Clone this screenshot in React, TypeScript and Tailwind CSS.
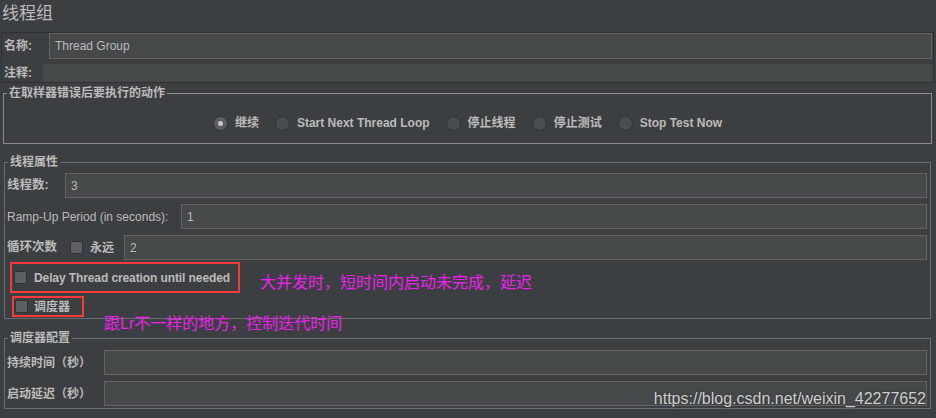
const Radio = ({ checked, label }: { checked?: boolean; label: string }) => (
  <label className="flex items-center gap-[7px]">
    <span
      className={`flex h-[15px] w-[15px] items-center justify-center rounded-full border border-[#2f3133] ${
        checked ? "bg-[#5b5e60]" : "bg-[#4a4d4f]"
      }`}
    >
      {checked && <span className="h-[5px] w-[5px] rounded-full bg-[#c8c8c8]" />}
    </span>
    <span className="font-bold">{label}</span>
  </label>
);

const Check = () => (
  <span className="h-[13px] w-[13px] shrink-0 rounded-[2px] border border-[#2f3133] bg-[#5d6062]" />
);

const Field = ({ value }: { value?: string }) => (
  <div className="flex h-[25px] flex-1 items-center border border-[#646464] bg-[#45494a] px-[5px] text-[12px]">
    {value}
  </div>
);

export default function App() {
  return (
    <div className="relative h-[418px] w-[936px] overflow-hidden bg-[#3c3f41] font-[family-name:'Liberation_Sans','Noto_Sans_CJK_SC',sans-serif] text-[12px] text-[#bbbbbb]">
      {/* title */}
      <div className="h-[32px] pl-[2px] pt-[3px] text-[17px] leading-[22px]">线程组</div>

      {/* name / comment */}
      <div className="ml-[1px] h-[51px] w-[933px] border border-[#2e3032]">
        <div className="flex h-[26px] items-center">
          <span className="w-[47px] pl-[2px] font-bold">名称:</span>
          <div className="mr-[1px] flex h-[26px] flex-1 items-center border border-[#646464] bg-[#45494a] px-[5px]">
            Thread Group
          </div>
        </div>
        <div className="mt-[5px] flex h-[18px] items-center">
          <span className="w-[41px] pl-[2px] font-bold">注释:</span>
          <div className="h-[18px] flex-1 bg-[#45494a]" />
        </div>
      </div>

      {/* sampler error action */}
      <fieldset className="ml-[3px] mt-[2px] w-[929px] border border-[#8c8c8c]">
        <legend className="ml-[3px] px-[2px] font-bold leading-[16px]">在取样器错误后要执行的动作</legend>
        <div className="mb-[12px] mt-[14px] flex h-[16px] items-center justify-center gap-[16px]">
          <Radio checked label="继续" />
          <Radio label="Start Next Thread Loop" />
          <Radio label="停止线程" />
          <Radio label="停止测试" />
          <Radio label="Stop Test Now" />
        </div>
      </fieldset>

      {/* thread properties */}
      <fieldset className="ml-[4px] mt-[10px] w-[927px] border border-[#6a6c6e] pb-[1px]">
        <legend className="ml-[3px] px-[2px] font-bold leading-[16px]">线程属性</legend>
        <div className="mr-[3px] mt-[3px] flex flex-col gap-[6px]">
          <div className="flex items-center">
            <span className="w-[60px] pl-[2px] text-[12.5px] font-bold">线程数:</span>
            <Field value="3" />
          </div>
          <div className="flex items-center">
            <span className="w-[176px] pl-[2px]">Ramp-Up Period (in seconds):</span>
            <Field value="1" />
          </div>
          <div className="flex items-center">
            <span className="w-[65px] pl-[2px] text-[12.5px] font-bold">循环次数</span>
            <Check />
            <span className="ml-[7px] w-[34px] font-bold">永远</span>
            <Field value="2" />
          </div>
        </div>
        <div className="ml-[5px] mt-[2px] flex h-[31px] w-[230px] items-center border-2 border-[#f33b3b] pl-[2px]">
          <Check />
          <span className="ml-[7px] font-bold tracking-[-0.1px]">Delay Thread creation until needed</span>
        </div>
        <div className="ml-[7px] mt-[3px] flex h-[21px] w-[72px] items-center border-2 border-[#f33b3b] pl-[1px]">
          <Check />
          <span className="ml-[6px] font-bold">调度器</span>
        </div>
      </fieldset>

      {/* scheduler config */}
      <fieldset className="ml-[4px] mt-[11px] w-[927px] border border-[#6a6c6e] pb-[2px]">
        <legend className="ml-[3px] px-[2px] font-bold leading-[16px]">调度器配置</legend>
        <div className="mr-[3px] mt-[4px] flex flex-col gap-[6px]">
          <div className="flex items-center">
            <span className="w-[99px] pl-[2px] font-bold">持续时间（秒）</span>
            <Field />
          </div>
          <div className="flex items-center">
            <span className="w-[99px] pl-[2px] font-bold">启动延迟（秒）</span>
            <Field />
          </div>
        </div>
      </fieldset>

      {/* annotations */}
      <div className="absolute left-[260px] top-[274px] text-[16px] leading-[18px] text-[#f01ef0]">
        大并发时，短时间内启动未完成，延迟
      </div>
      <div className="absolute left-[104px] top-[315px] text-[16px] leading-[18px] text-[#f01ef0]">
        跟Lr不一样的地方，控制迭代时间
      </div>
      <div className="absolute right-[10px] top-[389px] text-[16px] leading-[20px] text-[#cfcfcf] [text-shadow:0_0_2px_#2b2b2b]">
        https://blog.csdn.net/weixin_42277652
      </div>
    </div>
  );
}
